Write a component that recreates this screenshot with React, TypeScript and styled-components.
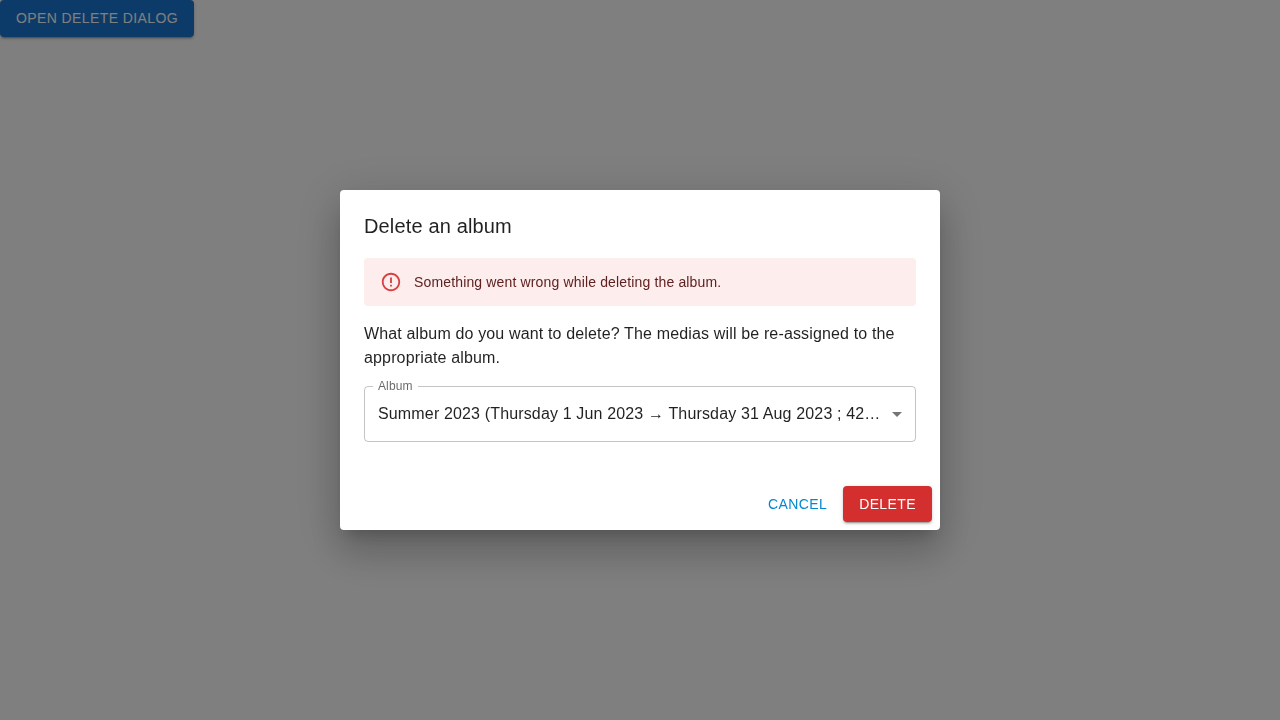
import React from 'react';
import styled, { createGlobalStyle, css } from 'styled-components';

const GlobalStyle = createGlobalStyle`
  *, *::before, *::after { box-sizing: border-box; }
  body {
    margin: 0;
    min-height: 100vh;
    background: #fff;
    color: rgba(0, 0, 0, 0.87);
    font-family: "Liberation Sans", Arial, sans-serif;
    font-size: 16px;
    line-height: 1.5;
    letter-spacing: 0.15008px;
    -webkit-font-smoothing: antialiased;
  }
`;

type Variant = 'primary' | 'danger' | 'text';

const variants = {
  primary: css`
    padding: 6px 16px;
    color: #fff;
    background: #1976d2;
  `,
  danger: css`
    padding: 6px 16px;
    color: #fff;
    background: #d32f2f;
  `,
  text: css`
    padding: 6px 8px;
    color: #0288d1;
    background: transparent;
  `,
};

const Button = styled.button<{ $variant: Variant }>`
  display: inline-flex;
  align-items: center;
  justify-content: center;
  vertical-align: middle;
  min-width: 64px;
  border: 0;
  border-radius: 4px;
  font-family: inherit;
  font-weight: 500;
  font-size: 14px;
  line-height: 1.75;
  letter-spacing: 0.39998px;
  text-transform: uppercase;
  cursor: pointer;
  ${({ $variant }) => variants[$variant]}
  box-shadow: ${({ $variant }) =>
    $variant === 'text'
      ? 'none'
      : '0 3px 1px -2px rgba(0,0,0,.2), 0 2px 2px 0 rgba(0,0,0,.14), 0 1px 5px 0 rgba(0,0,0,.12)'};
`;

const Page = styled.main`
  min-height: 100vh;
`;

const Backdrop = styled.div`
  position: fixed;
  inset: 0;
  display: flex;
  align-items: center;
  justify-content: center;
  background: rgba(0, 0, 0, 0.5);
`;

const Dialog = styled.section`
  display: flex;
  flex-direction: column;
  width: 600px;
  border-radius: 4px;
  background: #fff;
  box-shadow: 0 11px 15px -7px rgba(0, 0, 0, 0.2), 0 24px 38px 3px rgba(0, 0, 0, 0.14),
    0 9px 46px 8px rgba(0, 0, 0, 0.12);
`;

const Title = styled.h2`
  margin: 0;
  padding: 20px 24px 16px;
  font-size: 20px;
  font-weight: 500;
  line-height: 32px;
  letter-spacing: 0.15px;
`;

const Content = styled.div`
  padding: 0 24px 20px;
`;

const Alert = styled.div`
  display: flex;
  align-items: center;
  gap: 12px;
  height: 48px;
  margin-bottom: 16px;
  padding: 0 16px;
  border-radius: 4px;
  color: #5f2120;
  background: #fdeded;
  font-size: 14px;
  line-height: 20px;
`;

const AlertIcon = styled.svg`
  width: 22px;
  height: 22px;
  fill: #d32f2f;
  opacity: 0.9;
`;

const Message = styled.p`
  margin: 0;
`;

const Field = styled.div`
  position: relative;
  display: flex;
  align-items: center;
  height: 56px;
  margin: 16px 0;
  padding: 0 7px 0 14px;
`;

const Outline = styled.fieldset`
  position: absolute;
  inset: -5px 0 0;
  min-width: 0;
  margin: 0;
  padding: 0 8px;
  border: 1px solid rgba(0, 0, 0, 0.23);
  border-radius: 4px;
  pointer-events: none;
`;

const Notch = styled.legend`
  width: 45px;
  height: 11px;
  padding: 0;
`;

const FieldLabel = styled.label`
  position: absolute;
  top: 0;
  left: 0;
  color: rgba(0, 0, 0, 0.6);
  line-height: 23px;
  transform: translate(14px, -9px) scale(0.75);
  transform-origin: top left;
`;

const Value = styled.div`
  flex: 1;
  min-width: 0;
  overflow: hidden;
  white-space: nowrap;
  text-overflow: ellipsis;
  line-height: 23px;
`;

const Arrow = styled.svg`
  flex: none;
  width: 24px;
  height: 24px;
  margin-left: 1px;
  fill: rgba(0, 0, 0, 0.54);
`;

const Actions = styled.div`
  display: flex;
  justify-content: flex-end;
  gap: 8px;
  padding: 8px;
`;

export default function App() {
  return (
    <>
      <GlobalStyle />
      <Page>
        <Button $variant="primary">Open Delete Dialog</Button>
      </Page>
      <Backdrop>
        <Dialog role="dialog" aria-labelledby="dialog-title">
          <Title id="dialog-title">Delete an album</Title>
          <Content>
            <Alert role="alert">
              <AlertIcon viewBox="0 0 24 24">
                <path d="M11 15h2v2h-2zm0-8h2v6h-2zm.99-5C6.47 2 2 6.48 2 12s4.47 10 9.99 10C17.52 22 22 17.52 22 12S17.52 2 11.99 2zM12 20c-4.42 0-8-3.58-8-8s3.58-8 8-8 8 3.58 8 8-3.58 8-8 8z" />
              </AlertIcon>
              Something went wrong while deleting the album.
            </Alert>
            <Message>
              What album do you want to delete? The medias will be re-assigned to the appropriate album.
            </Message>
            <Field>
              <FieldLabel>Album</FieldLabel>
              <Value>Summer 2023 (Thursday 1 Jun 2023 → Thursday 31 Aug 2023 ; 42 medias)</Value>
              <Arrow viewBox="0 0 24 24">
                <path d="M7 10l5 5 5-5z" />
              </Arrow>
              <Outline aria-hidden="true">
                <Notch />
              </Outline>
            </Field>
          </Content>
          <Actions>
            <Button $variant="text">Cancel</Button>
            <Button $variant="danger">Delete</Button>
          </Actions>
        </Dialog>
      </Backdrop>
    </>
  );
}
